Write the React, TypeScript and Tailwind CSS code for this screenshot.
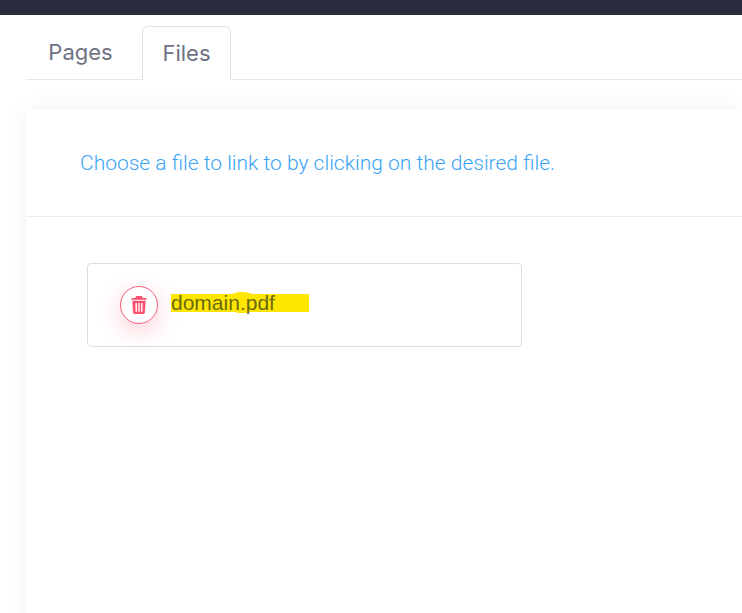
import React from 'react';

const App = () => {
  return (
    <div className="w-[742px] h-[613px] overflow-hidden bg-white">
      {/* Top bar */}
      <div className="h-[15px] bg-[#2b2d3f]" />

      {/* Tabs */}
      <div className="ml-[26px] mt-[11px] h-[54px] flex border-b border-[#e6e6ea] font-['Inter',sans-serif] text-[22px] text-[#6e7283]">
        <div className="w-[109px] mr-[7px] flex items-center justify-center">Pages</div>
        <div className="w-[89px] h-[54px] flex items-center justify-center bg-white border border-b-0 border-[#dfe0e6] rounded-t-[6px]">
          Files
        </div>
      </div>

      {/* Card */}
      <div className="ml-[26px] mt-[30px] h-[520px] bg-white shadow-[0_0_24px_rgba(0,0,0,0.06)]">
        <div className="h-[107px] border-b border-[#ebebeb] pl-[54px] pt-[38px] font-['Roboto',sans-serif] font-light text-[21px] leading-[30px] text-[#3aa3f7]">
          Choose a file to link to by clicking on the desired file.
        </div>
        <div className="ml-[61px] mt-[46px] w-[435px] h-[84px] border border-[#dedede] rounded-[4px] flex items-center pl-[32px]">
          <div className="w-[38px] h-[38px] rounded-full border border-[#f5607a] bg-white flex items-center justify-center shadow-[0_7px_22px_rgba(245,80,106,0.28)]">
            <svg width="16" height="18" viewBox="0 0 16 19" fill="#f8506e">
              <path d="M5 0h6l1 2h3.500c.3 0 .5.200.5.500V4H0V2.500c0-.3.200-.5.500-.5H4z" />
              <path fillRule="evenodd" d="M1 5h14l-.8 12.500c0 .8-.7 1.500-1.500 1.500H3.300c-.8 0-1.500-.7-1.500-1.500zM4.300 7.500v9h1.500v-9zM7.250 7.500v9h1.500v-9zM10.200 7.500v9h1.500v-9z" />
            </svg>
          </div>
          <div className="relative ml-[13px] mb-[5px] w-[138px] h-[18px] bg-[#ffe600] flex items-center font-['Liberation_Sans',sans-serif] text-[21px] text-[#6b6a10]">
            {/* marker stroke bump over the highlight */}
            <span className="absolute left-[54px] top-[-2px] w-[34px] h-[21px] rounded-[50%] bg-[#ffe600]" />
            <span className="relative">domain.pdf</span>
          </div>
        </div>
      </div>
    </div>
  );
};

export default App;
